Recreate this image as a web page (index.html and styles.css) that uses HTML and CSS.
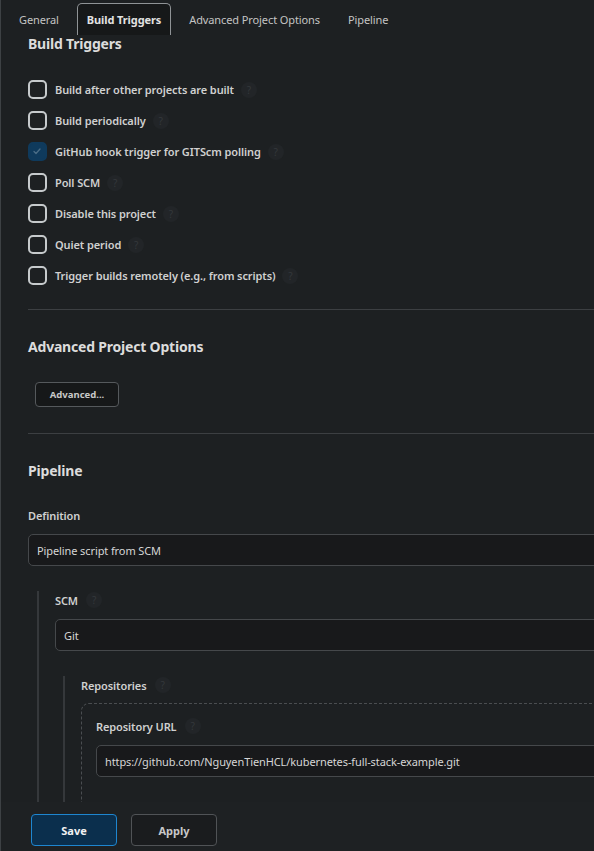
FILE: index.html
```html
<!DOCTYPE html>
<html>
<head>
<meta charset="utf-8">
<link rel="stylesheet" href="styles.css">
</head>
<body>
<div class="page">
  <nav class="tabs">
    <span class="tab">General</span>
    <span class="tab active">Build Triggers</span>
    <span class="tab">Advanced Project Options</span>
    <span class="tab">Pipeline</span>
  </nav>

  <main class="content">
    <section class="section">
      <h2 class="title first">Build Triggers</h2>
      <ul class="checks">
        <li class="row"><span class="box"></span><span class="label">Build after other projects are built</span><span class="help">?</span></li>
        <li class="row"><span class="box"></span><span class="label">Build periodically</span><span class="help">?</span></li>
        <li class="row"><span class="box checked"><svg viewBox="0 0 18 18" width="18" height="18"><path d="M6 9.5l2 2 4-4.5" fill="none" stroke="#4b6d86" stroke-width="1.3" stroke-linecap="round" stroke-linejoin="round"/></svg></span><span class="label">GitHub hook trigger for GITScm polling</span><span class="help">?</span></li>
        <li class="row"><span class="box"></span><span class="label">Poll SCM</span><span class="help">?</span></li>
        <li class="row"><span class="box"></span><span class="label">Disable this project</span><span class="help">?</span></li>
        <li class="row"><span class="box"></span><span class="label">Quiet period</span><span class="help">?</span></li>
        <li class="row"><span class="box"></span><span class="label">Trigger builds remotely (e.g., from scripts)</span><span class="help">?</span></li>
      </ul>
    </section>
    <hr class="divider">
    <section class="section">
      <h2 class="title">Advanced Project Options</h2>
      <button class="adv-btn">Advanced...</button>
    </section>
    <hr class="divider">
    <section class="section">
      <h2 class="title">Pipeline</h2>
      <div class="field">
        <div class="field-label">Definition</div>
        <div class="select">Pipeline script from SCM</div>
      </div>
      <div class="nested">
        <div class="field">
          <div class="field-label">SCM <span class="help">?</span></div>
          <div class="select">Git</div>
        </div>
        <div class="nested nested2">
          <div class="field">
            <div class="field-label">Repositories <span class="help">?</span></div>
            <div class="repo-box">
              <div class="field-label">Repository URL <span class="help">?</span></div>
              <div class="select input">https://github.com/NguyenTienHCL/kubernetes-full-stack-example.git</div>
              <div class="spacer"></div>
            </div>
          </div>
        </div>
      </div>
    </section>
  </main>

  <footer class="bottom-bar">
    <button class="btn save">Save</button>
    <button class="btn apply">Apply</button>
  </footer>
</div>
</body>
</html>
```

FILE: styles.css
```css
* { box-sizing: border-box; }
html, body {
  margin: 0;
  padding: 0;
  background: #1d2022;
  overflow: hidden;
  height: 851px;
}
body {
  font-family: "Noto Sans", "Open Sans", sans-serif;
  color: #d2d2d2;
  border-left: 1px solid #3d4144;
  letter-spacing: -0.1px;
}
.page {
  width: 640px;
}
.tabs {
  display: flex;
  align-items: flex-end;
  height: 35px;
  padding-left: 4px;
}
.tab {
  display: flex;
  align-items: center;
  height: 32px;
  margin: 0 4px;
  padding: 0 9px;
  font-size: 11px;
  color: #c4c4c4;
  border: 1px solid transparent;
  border-bottom: none;
  border-radius: 5px 5px 0 0;
  white-space: nowrap;
}
.tab.active {
  font-weight: 700;
  color: #e2e2e2;
  background: #161819;
  border-color: #8f9396;
}
.content {
  padding-left: 27px;
  padding-bottom: 200px;
}
.title {
  margin: 0;
  font-size: 14px;
  letter-spacing: -0.2px;
  font-weight: 700;
  line-height: 20px;
  color: #dcdcdc;
  padding-top: 27px;
}
.title.first {
  padding-top: 0;
  margin-top: -1px;
}
.checks {
  list-style: none;
  margin: 20px 0 0;
  padding: 0;
}
.row {
  display: flex;
  align-items: center;
  height: 31px;
}
.box {
  width: 19px;
  height: 19px;
  border: 2px solid #c6cacc;
  border-radius: 5px;
  flex: none;
}
.box.checked {
  border-color: #0f3a5c;
  background: #0f3a5c;
  position: relative;
}
.box.checked svg {
  position: absolute;
  left: -2px;
  top: -2px;
}
.label {
  margin-left: 8px;
  font-size: 11px;
  font-weight: 600;
  color: #d0d0d0;
}
.help {
  display: inline-flex;
  align-items: center;
  justify-content: center;
  width: 16px;
  height: 16px;
  margin-left: 7px;
  border-radius: 50%;
  background: #222528;
  color: #34383b;
  font-size: 10px;
  font-weight: 400;
}
.divider {
  border: none;
  border-top: 1px solid #3c3f42;
  margin: 18px 0 0;
  height: 0;
}
.adv-btn {
  display: block;
  margin: 25px 0 26px 7px;
  width: 84px;
  height: 25px;
  background: #161819;
  border: 1px solid #55595c;
  border-radius: 4px;
  color: #c8c8c8;
  font-family: inherit;
  font-size: 9.5px;
  font-weight: 700;
}
.field {
  margin-top: 26px;
}
.field-label {
  display: flex;
  align-items: center;
  height: 16px;
  font-size: 11px;
  font-weight: 600;
  color: #d0d0d0;
}
.field-label .help { margin-left: 8px; }
.select {
  margin-top: 11px;
  height: 32px;
  display: flex;
  align-items: center;
  padding-left: 8px;
  background: #18191b;
  border: 1px solid #45484b;
  border-radius: 5px;
  font-size: 11px;
  color: #d6d6d6;
}
.nested {
  margin: 25px 0 0 9px;
  border-left: 2px solid #35383b;
  padding-left: 16px;
  padding-top: 1px;
}
.nested .field { margin-top: 0; }
.nested .field > .select { margin-top: 11px; }
.nested2 {
  margin-top: 25px;
  margin-left: 8px;
}
.repo-box {
  margin-top: 10px;
  border: 1px dashed #4a4d50;
  border-radius: 8px;
  padding: 14px 0 0 14px;
}
.repo-box .select { margin-top: 11px; }
.spacer { height: 80px; }
.bottom-bar {
  position: fixed;
  left: 1px;
  right: 0;
  bottom: 0;
  height: 49px;
  background: #1e2123;
  display: flex;
  align-items: flex-start;
  gap: 14px;
  padding: 12px 0 0 30px;
}
.btn {
  width: 86px;
  height: 32px;
  border-radius: 4px;
  font-family: inherit;
  font-size: 11px;
  font-weight: 700;
}
.save {
  background: #0b2f4d;
  border: 1px solid #1e86d0;
  color: #f2f2f2;
}
.apply {
  background: #1a1c1e;
  border: 1px solid #505356;
  color: #c8c8c8;
}
```
